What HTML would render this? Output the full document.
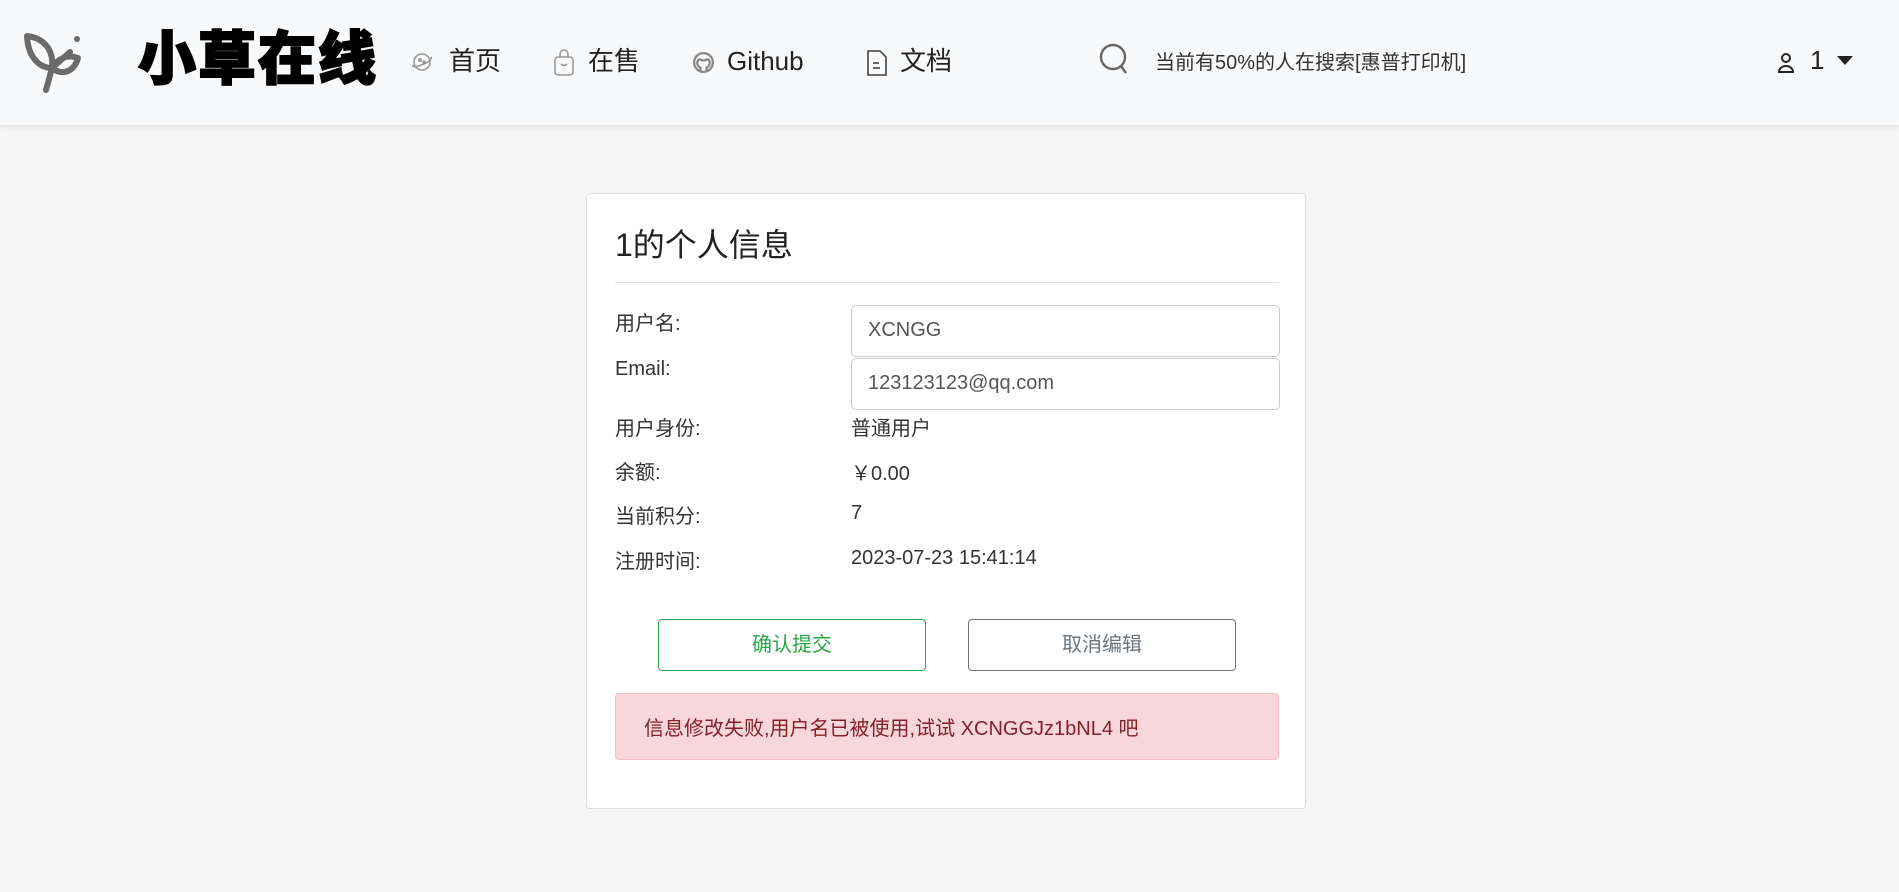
<!DOCTYPE html>
<html><head><meta charset="utf-8">
<style>
*{box-sizing:border-box;margin:0;padding:0}
html,body{width:1899px;height:892px;overflow:hidden}
body{background:#f5f5f5;font-family:"Liberation Sans","Noto Sans CJK SC",sans-serif;color:#212529;position:relative}
.nav{position:absolute;left:0;top:0;width:1899px;height:125px;background:#f8f9fa;box-shadow:0 2px 4px rgba(0,0,0,.08)}
.abs{position:absolute}
.brand{left:138px;top:18px;font-size:58px;font-weight:900;font-family:"Noto Sans CJK SC",sans-serif;letter-spacing:2px;-webkit-text-stroke:2px #000;color:#000;line-height:72px}
.ni{font-size:26px;color:#222;line-height:30px;top:46px}
.card{left:586px;top:193px;width:720px;height:616px;background:#fff;border:1px solid #dfdfdf;border-radius:4px}
.title{left:28px;top:26px;font-size:32px;color:#222}
.hr{left:28px;top:88px;width:664px;border-top:1px solid #e3e3e3}
.lab{font-size:20px;color:#333;left:28px}
.val{font-size:20px;color:#333;left:264px}
.inp{left:264px;width:429px;height:52px;border:1px solid #ccc;border-radius:5px;font-size:20px;color:#555;padding:13px 16px}
.btn{width:268px;height:52px;border-radius:4px;font-size:20px;text-align:center;line-height:50px;top:425px}
.alert{left:28px;top:499px;width:664px;height:67px;background:#f8d7da;border:1px solid #f1c0c6;border-radius:4px;color:#842029;font-size:20px;padding:18px 28px}
</style></head><body>
<div class="nav">
<svg class="abs" style="left:22px;top:28px" width="64" height="66" viewBox="0 0 64 66" fill="none" stroke="#6b6b6b" stroke-width="6" stroke-linecap="round" stroke-linejoin="round">
<path d="M24 62 L30 40"/><path d="M30 40 C18 40 6 30 5 8 C22 10 32 22 30 40Z"/><path d="M30 40 C36 30 46 26 56 30 C52 44 40 48 30 40"/><path d="M30 40 L48 24"/><circle cx="55" cy="11" r="3" fill="#6b6b6b" stroke="none"/>
</svg>
<div class="abs brand">小草在线</div>
<svg class="abs" style="left:410px;top:50px" width="24" height="24" viewBox="0 0 24 24" fill="none" stroke="#999" stroke-width="1.6"><circle cx="12" cy="12" r="8"/><path d="M3 15 C0 20 24 12 21 7"/><circle cx="10" cy="10" r="1.2"/><circle cx="14" cy="12" r="1"/></svg>
<div class="abs ni" style="left:449px">首页</div>
<svg class="abs" style="left:553px;top:49px" width="22" height="28" viewBox="0 0 22 28" fill="none" stroke="#999" stroke-width="1.6"><rect x="2" y="8" width="18" height="18" rx="3"/><path d="M7 8 V5 a4 4 0 0 1 8 0 V8"/><path d="M8 15 q3 3 6 0"/></svg>
<div class="abs ni" style="left:588px">在售</div>
<svg class="abs" style="left:691px;top:50px" width="25" height="25" viewBox="0 0 24 24" fill="none" stroke="#888" stroke-width="2.2"><circle cx="12" cy="12" r="9"/><path d="M9 21 v-4 c-2-1-3-3-3-5 c0-1 1-3 2-3 c1 0 2 1 4 1 c2 0 3-1 4-1 c1 0 2 2 2 3 c0 2-1 4-3 5 v4"/></svg>
<div class="abs ni" style="left:727px">Github</div>
<svg class="abs" style="left:866px;top:49px" width="22" height="28" viewBox="0 0 22 28" fill="none" stroke="#555" stroke-width="1.8"><path d="M2 2 H14 L20 8 V26 H2Z"/><path d="M7 14 H13 M7 19 H14"/></svg>
<div class="abs ni" style="left:900px">文档</div>
<svg class="abs" style="left:1098px;top:42px" width="34" height="34" viewBox="0 0 34 34" fill="none" stroke="#666" stroke-width="2.4"><circle cx="15" cy="15" r="12"/><path d="M23 24 L28 31"/></svg>
<div class="abs" style="left:1155px;top:46px;font-size:20px;color:#333">当前有50%的人在搜索[惠普打印机]</div>
<svg class="abs" style="left:1777px;top:52px" width="18" height="22" viewBox="0 0 18 22" fill="none" stroke="#222" stroke-width="2"><circle cx="9" cy="6" r="4"/><path d="M2 20 a7 6 0 0 1 14 0 Z"/></svg>
<div class="abs" style="left:1810px;top:45px;font-size:26px;color:#222">1</div>
<div class="abs" style="left:1837px;top:56px;width:0;height:0;border-left:8px solid transparent;border-right:8px solid transparent;border-top:9px solid #222"></div>
</div>
<div class="abs card">
<div class="abs title">1的个人信息</div>
<div class="abs hr"></div>
<div class="abs lab" style="top:113px">用户名:</div>
<div class="abs inp" style="top:111px">XCNGG</div>
<div class="abs lab" style="top:164px">Email:</div>
<div class="abs inp" style="top:164px">123123123@qq.com</div>
<div class="abs lab" style="top:218px">用户身份:</div><div class="abs val" style="top:218px">普通用户</div>
<div class="abs lab" style="top:262px">余额:</div><div class="abs val" style="top:263px">￥0.00</div>
<div class="abs lab" style="top:306px">当前积分:</div><div class="abs val" style="top:308px">7</div>
<div class="abs lab" style="top:351px">注册时间:</div><div class="abs val" style="top:353px">2023-07-23 15:41:14</div>
<div class="abs btn" style="left:71px;border:1px solid #28a745;color:#28a745">确认提交</div>
<div class="abs btn" style="left:381px;border:1px solid #6c757d;color:#6c757d">取消编辑</div>
<div class="abs alert">信息修改失败,用户名已被使用,试试 XCNGGJz1bNL4 吧</div>
</div>
</body></html>
